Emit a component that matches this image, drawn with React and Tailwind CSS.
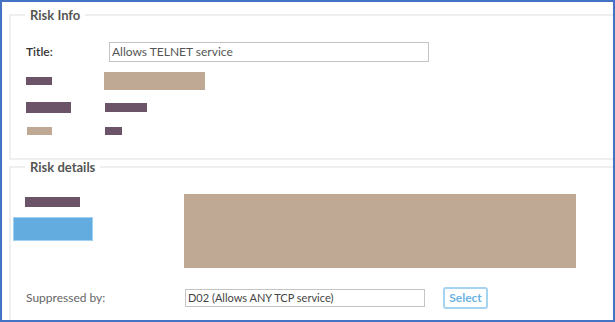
export default function App() {
  return (
    <div
      className="w-[615px] h-[322px] overflow-hidden border-2 border-[#4472c4] bg-white pt-[6px] pl-[7px]"
      style={{ fontFamily: 'Lato, "Liberation Sans", sans-serif' }}
    >
      <fieldset className="mr-[-6px] border-2 border-[#efefef] pt-[20px] pb-[23px]">
        <legend className="ml-[14px] px-[5px] text-[13px] leading-[14px] font-bold text-[#555]">
          Risk Info
        </legend>
        <div className="pl-[15px]">
          <div className="flex items-center h-[20px]">
            <span className="w-[83px] text-[12px] font-semibold text-[#333]">Title:</span>
            <div className="w-[320px] h-[20px] border border-[#c4c4c4] flex items-center px-[2px] text-[12px] text-[#555]">
              Allows TELNET service
            </div>
          </div>
          <div className="flex items-center mt-[10px] h-[18px]">
            <div className="w-[78px]">
              <div className="w-[26px] h-[8px] bg-[#6b5468]" />
            </div>
            <div className="w-[101px] h-[18px] bg-[#bfa995]" />
          </div>
          <div className="flex items-center mt-[12px] h-[11px]">
            <div className="w-[79px]">
              <div className="w-[45px] h-[11px] bg-[#6b5468]" />
            </div>
            <div className="w-[42px] h-[9px] bg-[#6b5468]" />
          </div>
          <div className="flex items-center mt-[13px] h-[9px]">
            <div className="w-[79px]">
              <div className="ml-[1px] w-[25px] h-[8px] bg-[#bfa995]" />
            </div>
            <div className="w-[17px] h-[8px] bg-[#6b5468]" />
          </div>
        </div>
      </fieldset>

      <fieldset className="mr-[-6px] border-2 border-[#efefef] pt-[20px] pb-[20px]">
        <legend className="ml-[14px] px-[5px] text-[13px] leading-[14px] font-bold text-[#555]">
          Risk details
        </legend>
        <div className="flex">
          <div className="w-[173px] pt-[3px]">
            <div className="ml-[14px] w-[55px] h-[10px] bg-[#6b5468]" />
            <div className="ml-[2px] mt-[10px] w-[80px] h-[24px] bg-[#63ace0] border border-[#9fd0f2]" />
          </div>
          <div className="w-[392px] h-[74px] bg-[#bfa995]" />
        </div>
        <div className="flex items-center mt-[19px] h-[22px]">
          <span className="w-[174px] pl-[15px] text-[12px] text-[#666]">Suppressed by:</span>
          <div className="w-[240px] h-[18px] border border-[#c4c4c4] flex items-center px-[2px] text-[11px] text-[#444]">
            D02 (Allows ANY TCP service)
          </div>
          <button className="ml-[18px] w-[45px] h-[22px] rounded-[3px] border-2 border-[#a4d4f2] text-[12px] font-bold text-[#6cb4e4]">
            Select
          </button>
        </div>
      </fieldset>
    </div>
  );
}
